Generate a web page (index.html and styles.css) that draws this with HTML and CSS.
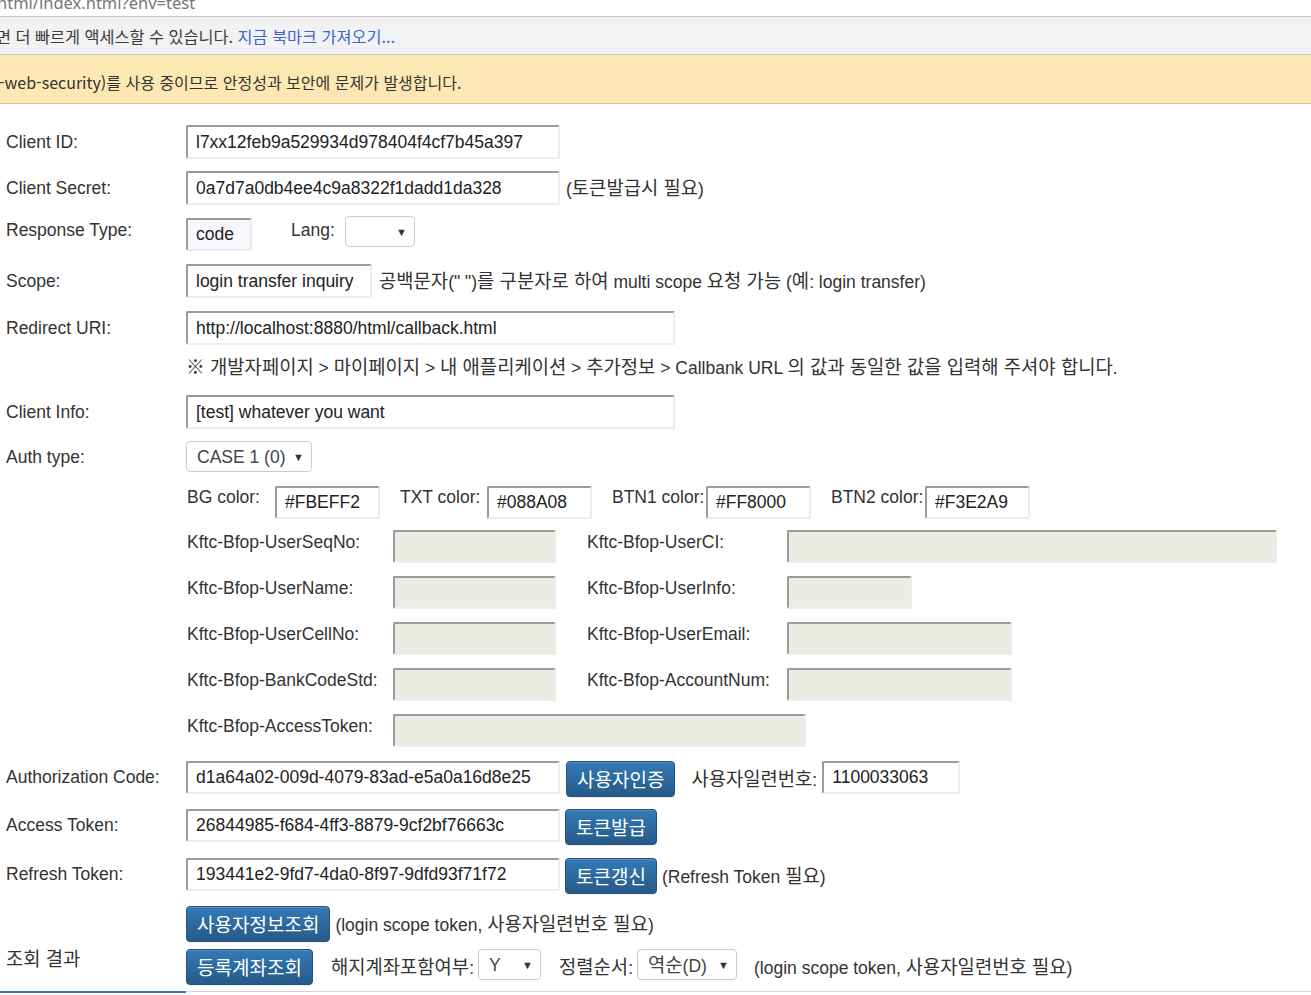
FILE: index.html
```html
<!DOCTYPE html>
<html lang="ko">
<head>
<meta charset="utf-8">
<title>Open API Test</title>
<link rel="stylesheet" href="styles.css">
</head>
<body>
<div class="chrome-url"><span class="url-text">html/index.html?env=test</span></div>
<div class="bookmark-bar"><span class="bm-text">면 더 빠르게 액세스할 수 있습니다. <span class="bm-link">지금 북마크 가져오기...</span></span></div>
<div class="infobar"><span class="info-text">-web-security)를 사용 중이므로 안정성과 보안에 문제가 발생합니다.</span></div>

<main class="form">
  <div class="row row-a">
    <span class="lbl">Client ID:</span>
    <input class="inp w374" value="l7xx12feb9a529934d978404f4cf7b45a397">
  </div>
  <div class="row row-b">
    <span class="lbl">Client Secret:</span>
    <input class="inp w374" value="0a7d7a0db4ee4c9a8322f1dadd1da328">
    <span class="txt ml6">(<span class="ko">토큰발급시 필요</span>)</span>
  </div>
  <div class="row row-c">
    <span class="lbl lh28">Response Type:</span>
    <input class="inp w66 inp-code" value="code">
    <span class="txt lh28 ml39">Lang:</span>
    <div class="sel w70 ml10"><span class="sel-val"></span><span class="caret">▼</span></div>
  </div>
  <div class="row row-d">
    <span class="lbl">Scope:</span>
    <input class="inp w186" value="login transfer inquiry">
    <span class="txt ml7"><span class="ko">공백문자</span>(" ")<span class="ko">를 구분자로 하여</span> multi scope <span class="ko">요청 가능</span> (<span class="ko">예</span>: login transfer)</span>
  </div>
  <div class="row row-e">
    <span class="lbl">Redirect URI:</span>
    <input class="inp w489" value="http://localhost:8880/html/callback.html">
  </div>
  <div class="row row-note">
    <span class="lbl"></span>
    <span class="txt"><span class="ko">※ 개발자페이지</span> &gt; <span class="ko">마이페이지</span> &gt; <span class="ko">내 애플리케이션</span> &gt; <span class="ko">추가정보</span> &gt; Callbank URL <span class="ko">의 값과 동일한 값을 입력해 주셔야 합니다</span>.</span>
  </div>
  <div class="row row-f">
    <span class="lbl">Client Info:</span>
    <input class="inp w489" value="[test] whatever you want">
  </div>
  <div class="row row-g">
    <span class="lbl">Auth type:</span>
    <div class="sel w126"><span class="sel-val">CASE 1 (0)</span><span class="caret">▼</span></div>
  </div>
  <div class="row row-h">
    <span class="lbl"></span>
    <div class="sub">
      <span class="clbl w88">BG color:</span><input class="inp inp-sm w105" value="#FBEFF2">
      <span class="clbl w87 ml20">TXT color:</span><input class="inp inp-sm w105" value="#088A08">
      <span class="clbl w94 ml20">BTN1 color:</span><input class="inp inp-sm w105" value="#FF8000">
      <span class="clbl w94 ml20">BTN2 color:</span><input class="inp inp-sm w105" value="#F3E2A9">
    </div>
  </div>
  <div class="row row-k row-k1">
    <span class="lbl"></span>
    <div class="sub">
      <span class="klbl">Kftc-Bfop-UserSeqNo:</span><input class="inp inp-sm ro w163" readonly>
      <span class="klbl2">Kftc-Bfop-UserCI:</span><input class="inp inp-sm ro w490" readonly>
    </div>
  </div>
  <div class="row row-k">
    <span class="lbl"></span>
    <div class="sub">
      <span class="klbl">Kftc-Bfop-UserName:</span><input class="inp inp-sm ro w163" readonly>
      <span class="klbl2">Kftc-Bfop-UserInfo:</span><input class="inp inp-sm ro w125" readonly>
    </div>
  </div>
  <div class="row row-k">
    <span class="lbl"></span>
    <div class="sub">
      <span class="klbl">Kftc-Bfop-UserCellNo:</span><input class="inp inp-sm ro w163" readonly>
      <span class="klbl2">Kftc-Bfop-UserEmail:</span><input class="inp inp-sm ro w225" readonly>
    </div>
  </div>
  <div class="row row-k">
    <span class="lbl"></span>
    <div class="sub">
      <span class="klbl">Kftc-Bfop-BankCodeStd:</span><input class="inp inp-sm ro w163" readonly>
      <span class="klbl2">Kftc-Bfop-AccountNum:</span><input class="inp inp-sm ro w225" readonly>
    </div>
  </div>
  <div class="row row-k">
    <span class="lbl"></span>
    <div class="sub">
      <span class="klbl">Kftc-Bfop-AccessToken:</span><input class="inp inp-sm ro w413" readonly>
    </div>
  </div>
  <div class="row row-btn row-ac">
    <span class="lbl lh33">Authorization Code:</span>
    <input class="inp inp-sm w374" value="d1a64a02-009d-4079-83ad-e5a0a16d8e25">
    <button class="btn ml6">사용자인증</button>
    <span class="txt lh33 ml16"><span class="ko">사용자일련번호</span>:</span>
    <input class="inp inp-sm w138 ml5" value="1100033063">
  </div>
  <div class="row row-btn row-at">
    <span class="lbl lh33">Access Token:</span>
    <input class="inp inp-sm w374" value="26844985-f684-4ff3-8879-9cf2bf76663c">
    <button class="btn ml5">토큰발급</button>
  </div>
  <div class="row row-btn row-rt">
    <span class="lbl lh33">Refresh Token:</span>
    <input class="inp inp-sm w374" value="193441e2-9fd7-4da0-8f97-9dfd93f71f72">
    <button class="btn ml5">토큰갱신</button>
    <span class="txt lh33 ml5">(Refresh Token <span class="ko">필요</span>)</span>
  </div>
  <div class="row row-btn row-ui">
    <span class="lbl"></span>
    <button class="btn">사용자정보조회</button>
    <span class="txt lh33 ml5">(login scope token, <span class="ko">사용자일련번호 필요</span>)</span>
  </div>
  <div class="row row-btn row-ra">
    <span class="lbl lbl-result"><span class="ko">조회 결과</span></span>
    <button class="btn">등록계좌조회</button>
    <span class="txt lh33 ml18"><span class="ko">해지계좌포함여부</span>:</span>
    <div class="sel w63 ml4"><span class="sel-val">Y</span><span class="caret">▼</span></div>
    <span class="txt lh33 ml18"><span class="ko">정렬순서</span>:</span>
    <div class="sel w100 ml4"><span class="sel-val"><span class="ko">역순</span>(D)</span><span class="caret">▼</span></div>
    <span class="txt lh33 ml17">(login scope token, <span class="ko">사용자일련번호 필요</span>)</span>
  </div>
  <div class="bottom-rule"><span class="rule-active"></span><span class="rule-rest"></span></div>
</main>
</body>
</html>
```

FILE: styles.css
```css
* { box-sizing: border-box; }

html, body {
  margin: 0;
  padding: 0;
  background: #ffffff;
  overflow: hidden;
}

body {
  width: 1311px;
  height: 995px;
  font-family: "Liberation Sans", "Noto Sans CJK KR", sans-serif;
  color: #333333;
}

/* ---------- browser chrome strips ---------- */
.chrome-url {
  height: 17px;
  overflow: hidden;
  border-bottom: 1px solid #c4c4c4;
  background: #ffffff;
}
.url-text {
  display: block;
  margin-top: -7px;
  margin-left: -3px;
  font-family: "Noto Sans", "Liberation Sans", sans-serif;
  font-size: 16.5px;
  line-height: 20px;
  color: #777777;
  white-space: nowrap;
}

.bookmark-bar {
  height: 38px;
  background: #f2f2f2;
  border-bottom: 1px solid #c8c8c8;
  display: flex;
  align-items: center;
  overflow: hidden;
}
.bm-text {
  margin-left: -4px;
  font-family: "Noto Sans CJK KR", sans-serif;
  font-size: 16.3px;
  line-height: 20px;
  color: #3c3c3c;
  white-space: nowrap;
}
.bm-link { color: #3b66d6; }

.infobar {
  height: 49px;
  background: #fde8b3;
  border-bottom: 1px solid #cfc5ad;
  display: flex;
  align-items: center;
  padding-top: 5px;
  overflow: hidden;
}
.info-text {
  margin-left: -1px;
  font-family: "Noto Sans CJK KR", sans-serif;
  font-size: 16px;
  line-height: 20px;
  color: #333333;
  white-space: nowrap;
}

/* ---------- form ---------- */
.form {
  padding: 21px 0 0 6px;
  font-size: 17.5px;
  line-height: 20px;
}

.ko {
  font-family: "Noto Sans CJK KR", sans-serif;
  font-size: 18.8px;
}

.row {
  display: flex;
  align-items: center;
  height: 34px;
  white-space: nowrap;
}
.row-b { margin-top: 12px; }
.row-c { margin-top: 11px; height: 35px; align-items: flex-start; }
.row-d { margin-top: 13px; }
.row-e { margin-top: 13px; }
.row-note { margin-top: 10px; height: 24px; }
.row-f { margin-top: 16px; }
.row-g { margin-top: 11px; height: 33px; }
.row-h { margin-top: 13px; height: 33px; align-items: flex-start; }
.row-k { margin-top: 13px; height: 33px; align-items: flex-start; }
.row-k1 { margin-top: 11px; }
.row-btn { height: 36px; align-items: flex-start; }
.row-ac { margin-top: 14px; }
.row-at { margin-top: 12px; }
.row-rt { margin-top: 13px; }
.row-ui { margin-top: 12px; }
.row-ra { margin-top: 7px; }

.lbl {
  flex: 0 0 180px;
  width: 180px;
  color: #333333;
}
.lh28 { line-height: 28px; }
.lh33 { line-height: 33px; }
.lbl-result { line-height: 18px; }

.txt { color: #333333; }

.sub {
  display: flex;
  align-items: flex-start;
  margin-left: 1px;
}
.clbl { line-height: 22px; }
.klbl { width: 206px; line-height: 24px; }
.klbl2 { width: 200px; margin-left: 31px; line-height: 24px; }

/* inputs */
.inp {
  height: 34px;
  padding: 0 8px;
  border-style: solid;
  border-width: 2px;
  border-color: #9b9b9b #ececec #ececec #9b9b9b;
  border-radius: 2px;
  background: #ffffff;
  font-family: "Liberation Sans", "Noto Sans CJK KR", sans-serif;
  font-size: 17.5px;
  color: #222222;
  outline: none;
}
.inp-sm { height: 33px; }
.inp-code { height: 33px; margin-top: 2px; background: #f6f8fd; }
.ro { background: #ebebe4; }

.w63 { width: 63px; }
.w66 { width: 66px; }
.w70 { width: 70px; }
.w87 { width: 87px; }
.w88 { width: 88px; }
.w94 { width: 94px; }
.w100 { width: 100px; }
.w105 { width: 105px; }
.w125 { width: 125px; }
.w126 { width: 126px; }
.w138 { width: 138px; }
.w163 { width: 163px; }
.w186 { width: 186px; }
.w225 { width: 225px; }
.w374 { width: 374px; }
.w413 { width: 413px; }
.w489 { width: 489px; }
.w490 { width: 490px; }

.ml4 { margin-left: 4px; }
.ml5 { margin-left: 5px; }
.ml6 { margin-left: 6px; }
.ml7 { margin-left: 7px; }
.ml10 { margin-left: 10px; }
.ml16 { margin-left: 16px; }
.ml17 { margin-left: 17px; }
.ml18 { margin-left: 18px; }
.ml20 { margin-left: 20px; }
.ml39 { margin-left: 39px; }

/* select look-alike */
.sel {
  height: 31px;
  border: 1px solid #cccccc;
  border-radius: 4px;
  background: #ffffff;
  display: flex;
  align-items: center;
  justify-content: space-between;
  padding: 0 7px 0 10px;
  color: #444444;
}
.sel-val { line-height: 20px; }
.caret {
  font-size: 11px;
  line-height: 12px;
  color: #333333;
}

/* buttons */
.btn {
  height: 36px;
  padding: 0 10px;
  border: 1px solid #245580;
  border-radius: 4px;
  background-color: #2e6da4;
  background-image: linear-gradient(to bottom, #337ab7 0%, #265a88 100%);
  box-shadow: inset 0 1px 0 rgba(255, 255, 255, 0.15), 0 1px 1px rgba(0, 0, 0, 0.075);
  color: #ffffff;
  font-family: "Noto Sans CJK KR", sans-serif;
  font-size: 19px;
  line-height: 20px;
  white-space: nowrap;
}

/* bottom tab rule */
.bottom-rule {
  display: flex;
  align-items: flex-start;
  margin: 6px 0 0 -6px;
  height: 3px;
}
.rule-active {
  width: 186px;
  height: 2px;
  background: #337ab7;
}
.rule-rest {
  flex: 1;
  height: 1px;
  background: #d5d5d5;
}
```
